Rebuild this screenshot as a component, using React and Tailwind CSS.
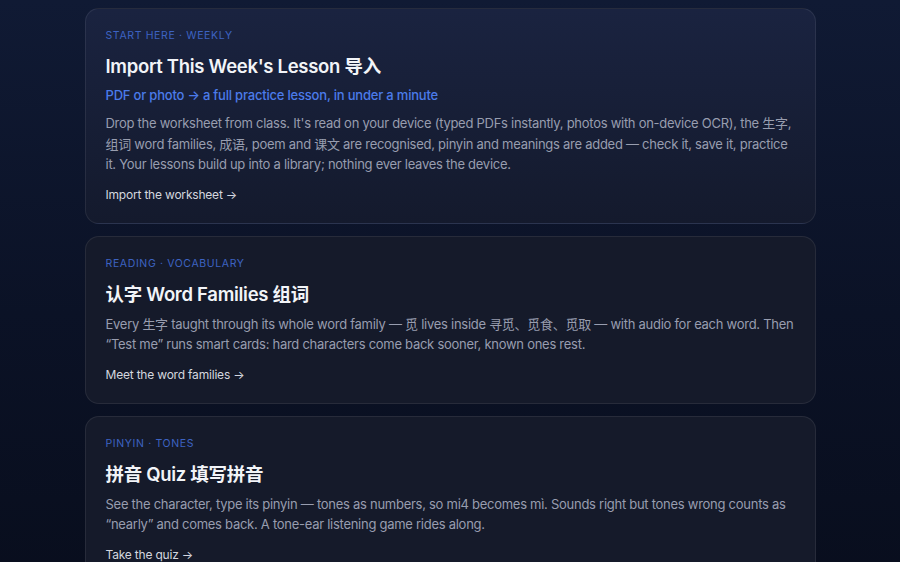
import React from 'react';

const cards = [
  {
    eyebrow: 'START HERE · WEEKLY',
    title: "Import This Week's Lesson 导入",
    subtitle: 'PDF or photo → a full practice lesson, in under a minute',
    body: "Drop the worksheet from class. It's read on your device (typed PDFs instantly, photos with on-device OCR), the 生字, 组词 word families, 成语, poem and 课文 are recognised, pinyin and meanings are added — check it, save it, practice it. Your lessons build up into a library; nothing ever leaves the device.",
    link: 'Import the worksheet →',
    featured: true,
  },
  {
    eyebrow: 'READING · VOCABULARY',
    title: '认字 Word Families 组词',
    body: 'Every 生字 taught through its whole word family — 觅 lives inside 寻觅、觅食、觅取 — with audio for each word. Then “Test me” runs smart cards: hard characters come back sooner, known ones rest.',
    link: 'Meet the word families →',
  },
  {
    eyebrow: 'PINYIN · TONES',
    title: '拼音 Quiz 填写拼音',
    body: 'See the character, type its pinyin — tones as numbers, so mi4 becomes mì. Sounds right but tones wrong counts as “nearly” and comes back. A tone-ear listening game rides along.',
    link: 'Take the quiz →',
  },
];

const Card = ({ card }) => (
  <div
    className={
      'rounded-[14px] border border-white/[0.08] px-5 pt-[19px] pb-[18px] ' +
      (card.featured
        ? 'bg-gradient-to-b from-[#1a2340] to-[#141a2d]'
        : 'bg-[#151a2a]')
    }
  >
    <div className="text-[10.5px] leading-4 tracking-[0.06em] text-[#3d63c2]">{card.eyebrow}</div>
    <h2 className="mt-[9px] text-[18.5px] leading-[26px] font-semibold tracking-[-0.3px] text-[#f2f4f8]">
      {card.title}
    </h2>
    {card.subtitle && (
      <p className="mt-[6px] text-[13px] leading-5 font-medium tracking-[-0.2px] text-[#4b7bea]">
        {card.subtitle}
      </p>
    )}
    <p
      className={
        'text-[13px] leading-[20.5px] tracking-[-0.27px] text-[#989daf] ' +
        (card.subtitle ? 'mt-[8px]' : 'mt-[7px]')
      }
    >
      {card.body}
    </p>
    <div className="mt-[10px] text-[12px] leading-5 tracking-[-0.2px] text-[#d4d7df]">{card.link}</div>
  </div>
);

const App = () => {
  return (
    <div
      className="min-h-screen bg-gradient-to-b from-[#101a34] via-[#0b1226] to-[#080d1c] pt-2 pb-10"
      style={{ fontFamily: 'Inter, "Noto Sans CJK SC", sans-serif' }}
    >
      <div className="mx-auto w-[731px] flex flex-col gap-3">
        {cards.map((card) => (
          <Card key={card.eyebrow} card={card} />
        ))}
      </div>
    </div>
  );
};

export default App;
